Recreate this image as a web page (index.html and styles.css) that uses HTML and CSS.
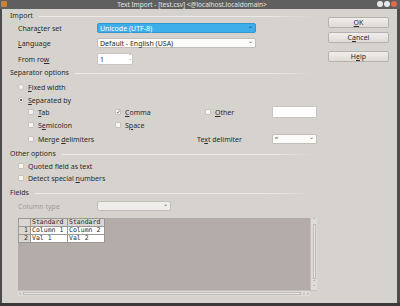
FILE: index.html
```html
<!DOCTYPE html>
<html lang="en">

<head>
    <meta charset="UTF-8" />
    <title>Text Import - [test.csv]</title>
    <link rel="stylesheet" href="styles.css">
</head>

<body>

    <div class="window">
        <div class="titlebar">
            <span class="app-icon"></span>
            <span class="title">Text Import - [test.csv] &lt;@localhost.localdomain&gt;</span>
            <div class="win-btns">
                <span class="wb"></span>
                <span class="wb"></span>
                <span class="wb close"></span>
            </div>
        </div>

        <div class="dialog">
            <div class="main">
                <div class="group-head"><span>Import</span></div>

                <div class="row r-charset">
                    <label>Chara<u>c</u>ter set</label>
                    <div class="combo selected">Unicode (UTF-8)<span class="arrow">&#8964;</span></div>
                </div>
                <div class="row r-lang">
                    <label><u>L</u>anguage</label>
                    <div class="combo">Default - English (USA)<span class="arrow">&#8964;</span></div>
                </div>
                <div class="row r-from">
                    <label>From ro<u>w</u></label>
                    <div class="spin">1<span class="spin-arrows"><i>&#710;</i><i>&#711;</i></span></div>
                </div>

                <div class="group-head g-sep"><span>Separator options</span></div>

                <div class="opt o-fixed"><span class="radio"></span><span><u>F</u>ixed width</span></div>
                <div class="opt o-separated"><span class="radio on"></span><span><u>S</u>eparated by</span></div>

                <div class="checks c-first">
                    <div class="opt"><span class="check"></span><span><u>T</u>ab</span></div>
                    <div class="opt"><span class="check on">&#10003;</span><span><u>C</u>omma</span></div>
                    <div class="opt"><span class="check"></span><span><u>O</u>ther</span></div>
                    <div class="textbox"></div>
                </div>
                <div class="checks c-second">
                    <div class="opt"><span class="check"></span><span>S<u>e</u>micolon</span></div>
                    <div class="opt"><span class="check"></span><span>S<u>p</u>ace</span></div>
                </div>
                <div class="checks c-third">
                    <div class="opt merge"><span class="check"></span><span>Merge <u>d</u>elimiters</span></div>
                    <label class="delim-label">Te<u>x</u>t delimiter</label>
                    <div class="combo small">"<span class="arrow">&#8964;</span></div>
                </div>

                <div class="group-head g-other"><span>Other options</span></div>

                <div class="opt o-quoted"><span class="check"></span><span>Quoted field as text</span></div>
                <div class="opt o-detect"><span class="check"></span><span>Detect special <u>n</u>umbers</span></div>

                <div class="group-head g-fields"><span>Fields</span></div>

                <div class="row r-coltype">
                    <label class="disabled">Column t<u>y</u>pe</label>
                    <div class="combo empty"><span class="arrow">&#8964;</span></div>
                </div>

                <div class="preview">
                    <div class="preview-body">
                        <div class="grid-area">
                            <table class="grid">
                                <tr>
                                    <th class="num"></th>
                                    <th>Standard</th>
                                    <th>Standard</th>
                                </tr>
                                <tr>
                                    <th class="num">1</th>
                                    <td>Column 1</td>
                                    <td>Column 2</td>
                                </tr>
                                <tr>
                                    <th class="num">2</th>
                                    <td>Val 1</td>
                                    <td>Val 2</td>
                                </tr>
                            </table>
                        </div>
                        <div class="vscroll">
                            <span class="sarrow">&#710;</span>
                            <div class="vtrack"></div>
                            <span class="sarrow">&#710;</span>
                            <span class="sarrow">&#711;</span>
                        </div>
                    </div>
                    <div class="hscroll">
                        <span class="sarrow">&lsaquo;</span>
                        <div class="htrack"></div>
                        <span class="sarrow">&lsaquo;</span>
                        <span class="sarrow">&rsaquo;</span>
                        <span class="corner"></span>
                    </div>
                </div>
            </div>

            <div class="side">
                <button class="btn b-ok"><u>O</u>K</button>
                <button class="btn b-cancel">C<u>a</u>ncel</button>
                <button class="btn b-help">H<u>e</u>lp</button>
            </div>
        </div>
        <div class="desk"></div>
    </div>

</body>

</html>
```

FILE: styles.css
```css
* {
    box-sizing: border-box;
}

body {
    margin: 0;
    background: #3a3a3a;
    font-family: "Noto Sans", "DejaVu Sans", sans-serif;
    font-size: 7px;
    color: #2b2b2b;
}

u {
    text-decoration-thickness: 1px;
    text-underline-offset: 1px;
}

.window {
    width: 400px;
    height: 306px;
    overflow: hidden;
}

/* title bar */
.titlebar {
    height: 9px;
    background: #5f5f5f;
    position: relative;
    display: flex;
    align-items: center;
    justify-content: center;
}

.title {
    color: #e4e4e4;
    font-size: 6.5px;
    line-height: 9px;
    margin-left: -16px;
}

.app-icon {
    position: absolute;
    left: 1px;
    top: 1px;
    width: 6px;
    height: 6px;
    background: #c8823a;
    border-radius: 1px;
}

.win-btns {
    position: absolute;
    right: 3px;
    top: 1px;
    display: flex;
    gap: 1px;
}

.wb {
    width: 6px;
    height: 6px;
    border-radius: 50%;
    background: #e8e8e8;
}

.wb.close {
    background: #e06a4a;
}

/* dialog */
.dialog {
    height: 294px;
    display: flex;
    background: #d6d2ce;
    border-left: 2px solid #4c4c4c;
    border-right: 3px solid #4c4c4c;
    padding-top: 2px;
}

.main {
    width: 318px;
    padding-left: 8px;
}

.side {
    display: flex;
    flex-direction: column;
    padding-left: 8px;
}

.btn {
    width: 61px;
    height: 11px;
    padding: 0;
    font: inherit;
    color: #2b2b2b;
    border: 1px solid #b5b1ad;
    border-radius: 2px;
    background: linear-gradient(#f0eeeb, #dedad6);
}

.b-ok {
    margin-top: 6px;
}

.b-cancel {
    margin-top: 4px;
}

.b-help {
    margin-top: 8px;
}

.group-head {
    height: 10px;
    display: flex;
    align-items: center;
    gap: 6px;
    line-height: 10px;
}

.group-head::after {
    content: "";
    flex: 1;
    height: 1px;
    margin-right: 8px;
    background: linear-gradient(to right, #ece9e6, #ece9e6 85%, rgba(236, 233, 230, 0));
}

.g-sep {
    margin-top: 3px;
}

.g-other {
    margin-top: 5px;
}

.g-fields {
    margin-top: 5px;
}

.row {
    display: flex;
    align-items: center;
    padding-left: 8px;
    height: 10px;
}

.row label {
    width: 79px;
}

.disabled {
    color: #a09c98;
}

.r-charset {
    margin-top: 2px;
}

.r-lang {
    margin-top: 5px;
}

.r-from {
    margin-top: 5px;
    height: 12px;
}

.r-coltype {
    margin-top: 3px;
}

.combo {
    position: relative;
    width: 159px;
    height: 10px;
    line-height: 9px;
    padding-left: 2px;
    background: #fbfbfa;
    border: 1px solid #c2beba;
    border-radius: 2px;
    white-space: nowrap;
}

.combo .arrow {
    position: absolute;
    right: 2px;
    top: -2px;
    font-size: 6px;
    color: #555;
}

.combo.selected {
    background: #3daee9;
    border-color: #3597cb;
    color: #fff;
}

.combo.selected .arrow {
    color: #2b2b2b;
}

.combo.empty {
    width: 74px;
    background: #efedeb;
}

.combo.small {
    width: 45px;
}

.spin {
    position: relative;
    width: 36px;
    height: 12px;
    line-height: 11px;
    padding-left: 2px;
    background: #fff;
    border: 1px solid #c8c4c0;
    border-radius: 2px;
}

.spin-arrows {
    position: absolute;
    right: 1px;
    top: 0;
    display: flex;
    flex-direction: column;
    font-size: 5px;
    line-height: 5px;
    color: #888;
}

.spin-arrows i {
    font-style: normal;
    height: 5px;
}

/* options */
.opt {
    display: flex;
    align-items: center;
    gap: 4px;
    height: 10px;
    white-space: nowrap;
}

.o-fixed,
.o-separated,
.o-quoted,
.o-detect {
    padding-left: 8px;
}

.o-fixed {
    margin-top: 4px;
}

.o-separated {
    margin-top: 3px;
}

.o-quoted {
    margin-top: 2px;
}

.o-detect {
    margin-top: 2px;
}

.radio {
    width: 6px;
    height: 6px;
    border-radius: 50%;
    border: 1px solid #c6c2be;
    background: #f6f5f4;
    position: relative;
}

.radio.on::after {
    content: "";
    position: absolute;
    left: 1px;
    top: 1px;
    width: 2px;
    height: 2px;
    border-radius: 50%;
    background: #333;
}

.check {
    width: 6px;
    height: 6px;
    border: 1px solid #c6c2be;
    border-radius: 1px;
    background: #f6f5f4;
    font-size: 6px;
    line-height: 4px;
    color: #444;
    text-align: center;
}

.checks {
    display: grid;
    grid-template-columns: 87px 90px 67px 45px;
    align-items: center;
    padding-left: 18px;
}

.c-first {
    margin-top: 1px;
    height: 12px;
}

.c-second {
    margin-top: 2px;
    height: 10px;
}

.c-third {
    margin-top: 4px;
    height: 10px;
    grid-template-columns: 169px 75px 45px;
}

.textbox {
    height: 12px;
    background: #fff;
    border: 1px solid #c8c4c0;
    border-radius: 1px;
}

/* preview */
.preview {
    margin-top: 7px;
    margin-left: 8px;
    width: 299px;
    height: 78px;
    display: flex;
    flex-direction: column;
}

.preview-body {
    flex: 1;
    display: flex;
}

.grid-area {
    flex: 1;
    background: #b3aca8;
}

.grid {
    border-collapse: collapse;
    font-family: "DejaVu Sans Mono", monospace;
    font-size: 6.5px;
    line-height: 7px;
}

.grid th,
.grid td {
    border: 1px solid #9d9793;
    padding: 0 1px;
    text-align: left;
    font-weight: normal;
    white-space: nowrap;
}

.grid th {
    background: #dad7d3;
}

.grid th.num {
    width: 12px;
    text-align: right;
    padding-right: 2px;
}

.grid td {
    background: #fff;
    width: 37px;
}

.vscroll {
    width: 7px;
    display: flex;
    flex-direction: column;
    align-items: center;
    background: #dedbd8;
    border-left: 1px solid #c4c0bc;
}

.sarrow {
    font-size: 5px;
    line-height: 5px;
    height: 5px;
    color: #8a8682;
}

.vtrack {
    flex: 1;
    width: 3px;
    margin: 1px 0;
    border: 1px solid #bcb8b4;
    background: #ecebea;
}

.hscroll {
    height: 6px;
    display: flex;
    align-items: center;
    background: #dedbd8;
    border-top: 1px solid #c4c0bc;
}

.htrack {
    flex: 1;
    height: 3px;
    margin: 0 1px;
    border: 1px solid #bcb8b4;
    background: #ecebea;
}

.hscroll .sarrow {
    width: 4px;
    text-align: center;
    font-size: 6px;
}

.corner {
    width: 7px;
    height: 5px;
    background: #d6d2ce;
}

.desk {
    height: 3px;
    background: #3a3a3a;
}
```
